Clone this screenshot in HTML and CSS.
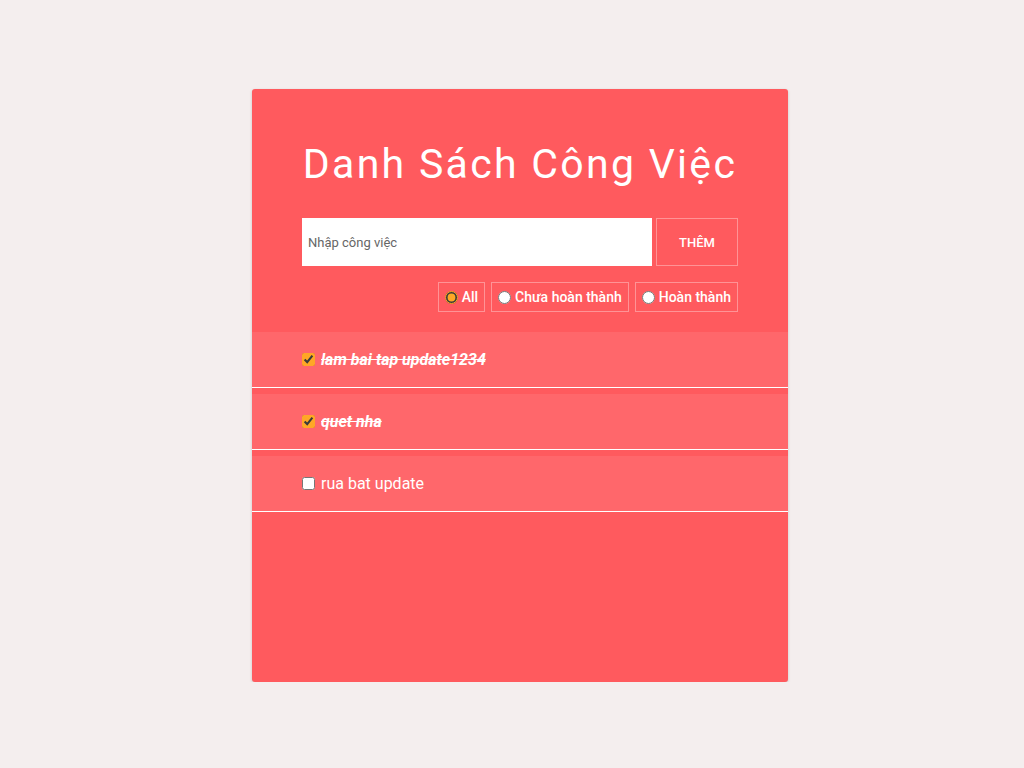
FILE: index.html
```html
<!DOCTYPE html>
<html lang="vi">
<head>
<meta charset="utf-8">
<title>Danh Sách Công Việc</title>
<link rel="stylesheet" href="styles.css">
</head>
<body>
<div class="card">
  <div class="header">
    <h1 class="title">Danh Sách Công Việc</h1>
    <form class="add-form">
      <input class="add-input" type="text" placeholder="Nhập công việc">
      <button class="add-btn" type="button">THÊM</button>
    </form>
    <div class="filters">
      <label class="filter"><input type="radio" name="f" checked> All</label>
      <label class="filter"><input type="radio" name="f"> Chưa hoàn thành</label>
      <label class="filter"><input type="radio" name="f"> Hoàn thành</label>
    </div>
  </div>
  <ul class="list">
    <li class="item done"><label><input type="checkbox" checked> <span>lam bai tap update1234</span></label></li>
    <li class="item done"><label><input type="checkbox" checked> <span>quet nha</span></label></li>
    <li class="item"><label><input type="checkbox"> <span>rua bat update</span></label></li>
  </ul>
</div>
</body>
</html>
```
FILE: styles.css
```css
html, body {
  margin: 0;
  padding: 0;
}
body {
  background: #f4eeee;
  font-family: Roboto, "Liberation Sans", sans-serif;
  padding: 89px 0 0 16px;
}
.card {
  width: 536px;
  height: 593px;
  margin: 0 auto;
  background: #ff5a5e;
  border-radius: 3px;
  box-shadow: 0 1px 3px rgba(0,0,0,0.18);
  box-sizing: border-box;
  overflow: hidden;
}
.header {
  padding: 52px 50px 20px;
}
.title {
  margin: 0 0 30px;
  color: #fff;
  font-weight: 400;
  font-size: 41px;
  letter-spacing: 2.3px;
  line-height: 47px;
  text-align: center;
}
.add-form {
  display: flex;
  gap: 4px;
  height: 48px;
}
.add-input {
  flex: 1;
  border: none;
  margin: 0;
  padding: 0 6px;
  font-family: Roboto, "Liberation Sans", sans-serif;
  font-size: 13px;
  color: #333;
  background: #fff;
  outline: none;
}
.add-input::placeholder {
  color: #666;
}
.add-btn {
  width: 82px;
  margin: 0;
  border: 1px solid rgba(255,255,255,0.35);
  background: transparent;
  color: #fff;
  font-family: Roboto, "Liberation Sans", sans-serif;
  font-size: 13px;
  font-weight: 500;
}
.filters {
  display: flex;
  justify-content: flex-end;
  gap: 6px;
  margin-top: 16px;
}
.filter {
  display: flex;
  align-items: center;
  gap: 4px;
  height: 30px;
  box-sizing: border-box;
  padding: 0 6px;
  border: 1px solid rgba(255,255,255,0.35);
  color: #fff;
  font-size: 14px;
  font-weight: 500;
}
.filter input {
  margin: 0;
  width: 13px;
  height: 13px;
  accent-color: #ffa726;
}
.list {
  list-style: none;
  margin: 0;
  padding: 0;
}
.item {
  height: 56px;
  box-sizing: border-box;
  background: #ff676b;
  border-bottom: 1px solid #fff;
  margin-bottom: 6px;
  padding: 0 50px;
  display: flex;
  align-items: center;
}
.item label {
  display: flex;
  align-items: center;
  gap: 6px;
  color: #fff;
  font-size: 16px;
}
.item input {
  margin: 0;
  width: 13px;
  height: 13px;
  accent-color: #ffa726;
}
.item.done span {
  font-style: italic;
  font-weight: 700;
  text-decoration: line-through;
}
```
